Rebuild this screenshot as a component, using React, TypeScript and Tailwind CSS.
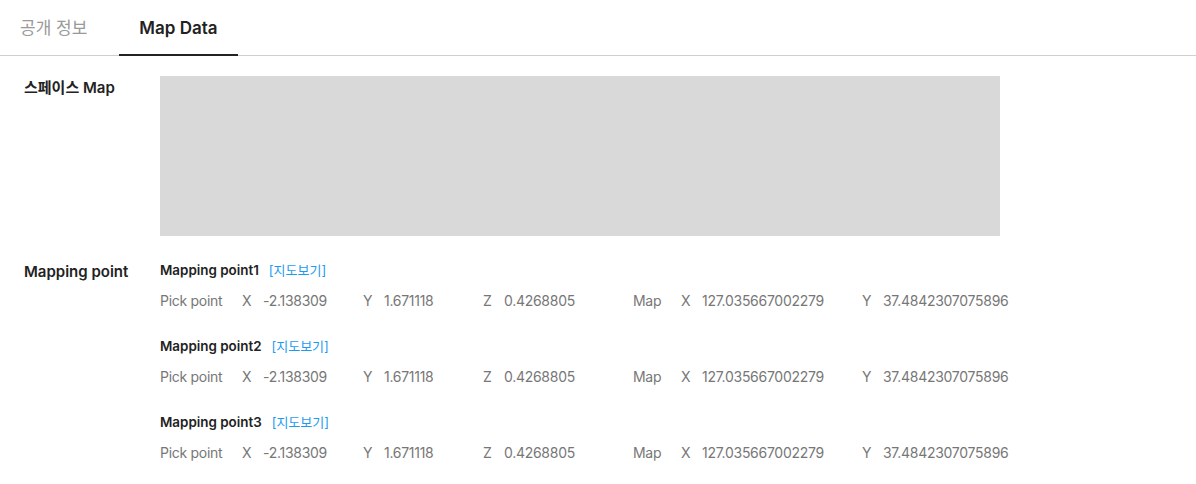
const font = { fontFamily: "Inter, 'Noto Sans CJK KR', sans-serif" };

const points = [1, 2, 3].map((n) => ({
  title: `Mapping point${n}`,
  pick: { x: "-2.138309", y: "1.671118", z: "0.4268805" },
  map: { x: "127.035667002279", y: "37.4842307075896" },
}));

function Pair({ k, v, w }: { k: string; v: string; w: string }) {
  return (
    <div className={`flex ${w}`}>
      <span className="w-[21px]">{k}</span>
      <span>{v}</span>
    </div>
  );
}

export default function App() {
  return (
    <div className="min-h-[484px] w-[1196px] bg-white text-[#222]" style={font}>
      {/* Tabs */}
      <div className="flex h-[56px] gap-3 border-b border-[#cfcfcf]">
        <button className="relative px-5 pt-[3px] text-[17px] text-[#9a9a9a]">공개 정보</button>
        <button className="relative px-5 pt-[3px] text-[17px] font-semibold text-[#222]">
          Map Data
          <span className="absolute right-0 -bottom-px left-0 h-[2px] bg-[#222]" />
        </button>
      </div>

      {/* Space map */}
      <section className="flex pt-[20px] pl-6">
        <div className="w-[136px] pt-[2px] text-[15px] font-semibold leading-[20px]">스페이스 Map</div>
        <div className="h-[160px] w-[840px] bg-[#d9d9d9]" />
      </section>

      {/* Mapping points */}
      <section className="flex pt-[25px] pl-6">
        <div className="w-[136px] pt-[1px] text-[15px] font-semibold leading-[20px]">Mapping point</div>
        <div className="flex flex-col gap-[27px]">
          {points.map((p) => (
            <div key={p.title} className="flex flex-col gap-[12px]">
              <div className="flex items-center gap-[10px] text-[13.4px] leading-[18px]">
                <span className="font-semibold">{p.title}</span>
                <span className="text-[13px] text-[#1d9bf0]">[지도보기]</span>
              </div>
              <div className="flex text-[14px] leading-[19px] tracking-[-0.02em] text-[#777]">
                <span className="w-[82px]">Pick point</span>
                <Pair k="X" v={p.pick.x} w="w-[121px]" />
                <Pair k="Y" v={p.pick.y} w="w-[120px]" />
                <Pair k="Z" v={p.pick.z} w="w-[150px]" />
                <span className="w-[48px]">Map</span>
                <Pair k="X" v={p.map.x} w="w-[181px]" />
                <Pair k="Y" v={p.map.y} w="w-[160px]" />
              </div>
            </div>
          ))}
        </div>
      </section>
    </div>
  );
}
